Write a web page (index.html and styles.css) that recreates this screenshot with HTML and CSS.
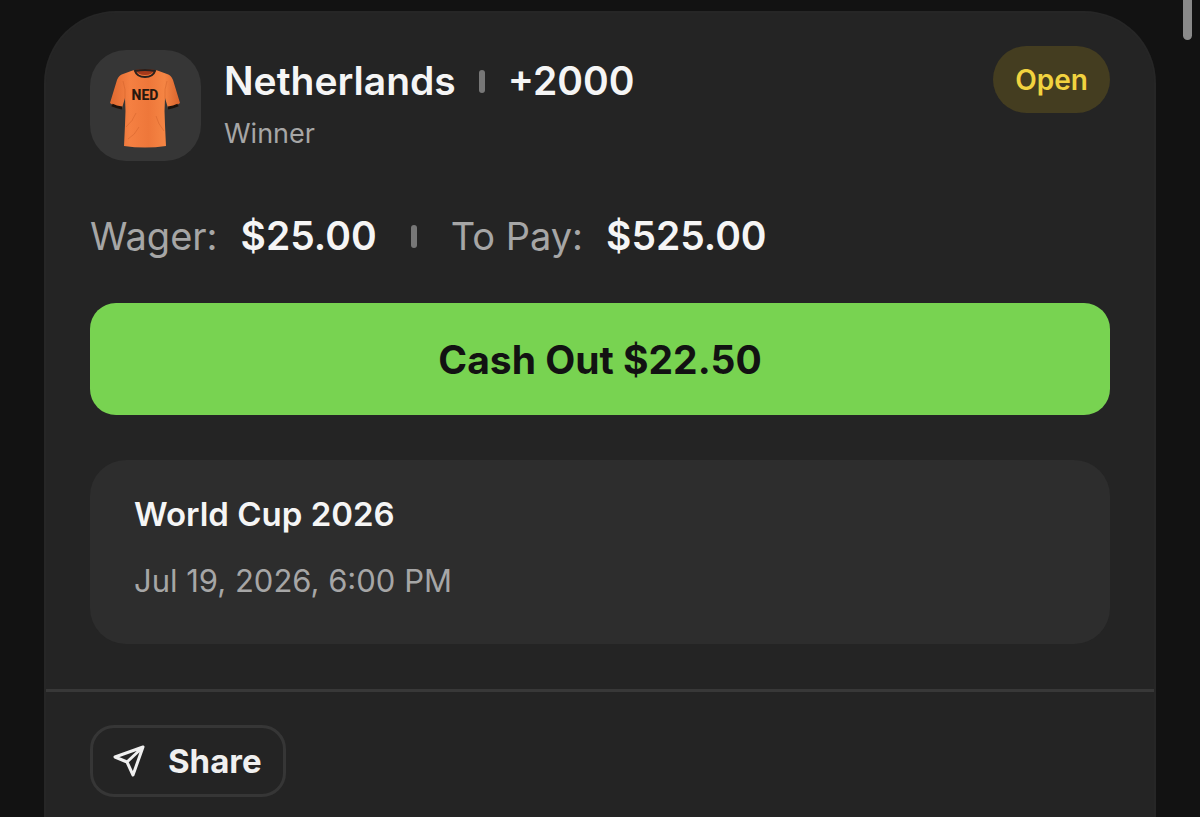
FILE: index.html
```html
<!DOCTYPE html>
<html lang="en">
<head>
<meta charset="utf-8">
<meta name="viewport" content="width=device-width, initial-scale=1">
<title>Netherlands +2000</title>
<link rel="stylesheet" href="styles.css">
</head>
<body>
<main class="bet-card">
  <div class="bet-body">
    <header class="bet-header">
      <div class="team-tile">
        <svg class="shirt" viewBox="0 0 72 80" role="img" aria-label="Netherlands shirt">
          <defs>
            <linearGradient id="cloth" x1="0" x2="1" y1="0" y2="0">
              <stop offset="0" stop-color="#df6930"/>
              <stop offset=".28" stop-color="#f58042"/>
              <stop offset=".55" stop-color="#ee773a"/>
              <stop offset=".78" stop-color="#f58544"/>
              <stop offset="1" stop-color="#d9632c"/>
            </linearGradient>
          </defs>
          <path fill="url(#cloth)" d="M25 1 Q36 4 47 1 L58 5 Q62 6 64 11 L71 34 Q66 38 59 39 L56 29 Q55 42 56 56 L57 77 Q36 80 15 77 L16 56 Q17 42 16 29 L13 39 Q6 38 1 34 L8 11 Q10 6 14 5 Z"/>
          <path fill="#a5391a" d="M26 1 Q36 -1 46 1 Q43 6 36 6 Q29 6 26 1Z"/>
          <path fill="none" stroke="#28201c" stroke-width="2" d="M26 2 Q36 0 46 2 Q44 8 36 8 Q28 8 26 2Z"/>
          <path fill="none" stroke="#1c120c" stroke-width="3" d="M3 36 Q7 38 13 39 M69 36 Q65 38 59 39"/>
          <path fill="none" stroke="#c95a26" stroke-width="1" opacity=".4" d="M16 30 Q17 20 14 12 M56 30 Q55 20 58 12 M17 58 Q24 52 27 44 M55 62 Q49 55 47 47 M19 70 Q26 66 30 58"/>
          <text class="shirt-name" x="36" y="31" text-anchor="middle">NED</text>
        </svg>
      </div>
      <div class="selection">
        <h1 class="selection-title"><span>Netherlands</span><span class="bar"></span><span>+2000</span></h1>
        <p class="market">Winner</p>
      </div>
      <span class="status">Open</span>
    </header>
    <div class="stakes">
      <dl class="stake"><dt>Wager:</dt><dd>$25.00</dd></dl>
      <span class="bar"></span>
      <dl class="stake"><dt>To Pay:</dt><dd>$525.00</dd></dl>
    </div>
    <button class="cash-out" type="button">Cash Out $22.50</button>
    <section class="event">
      <h2 class="event-name">World Cup 2026</h2>
      <p class="event-time">Jul 19, 2026, 6:00 PM</p>
    </section>
  </div>
  <footer class="bet-footer">
    <button class="share" type="button">
      <svg class="share-icon" viewBox="0 0 32 32" aria-hidden="true">
        <path d="M30 2 L2 12 L14 17 L20 30 Z M30 2 L14 17"/>
      </svg>
      <span>Share</span>
    </button>
  </footer>
</main>
<div class="scroll-thumb"></div>
</body>
</html>
```
FILE: styles.css
```css
* { box-sizing: border-box; }

body {
  margin: 0;
  min-height: 100vh;
  display: flex;
  padding: 11px 44px 0;
  background: #121212;
  color: #f5f5f5;
  font-family: Inter, "Liberation Sans", sans-serif;
}

h1, h2, p, dl, dd { margin: 0; }

.bet-card {
  flex: 1;
  min-width: 0;
  border: 2px solid #262626;
  border-bottom: 0;
  border-radius: 72px 72px 0 0;
  background: #242424;
}

.bet-body { padding: 37px 44px 45px; }

.bet-header {
  display: flex;
  align-items: flex-start;
  gap: 23px;
}

.team-tile {
  display: grid;
  place-items: center;
  flex: none;
  width: 111px;
  height: 111px;
  padding: 6px 2px 0 0;
  border-radius: 36px;
  background: #363636;
}

.shirt { width: 72px; height: 80px; }

.shirt-name {
  fill: #28180f;
  font: 800 14px Roboto, sans-serif;
}

.selection { flex: 1; padding-top: 6px; }

.selection-title {
  display: flex;
  align-items: center;
  gap: 23px;
  font-size: 39px;
  font-weight: 600;
  line-height: 50px;
}

.bar {
  width: 6px;
  height: 23px;
  border-radius: 3px;
  background: #777;
}

.market {
  padding-top: 10px;
  color: #a6a6a6;
  font-size: 27px;
  line-height: 36px;
}

.status {
  margin-top: -4px;
  padding: 1px 22px 0;
  border-radius: 34px;
  background: #443d20;
  color: #f2d33f;
  font-size: 28px;
  font-weight: 600;
  line-height: 66px;
}

.stakes {
  display: flex;
  align-items: center;
  gap: 34px;
  padding: 50px 0 42px;
  font-size: 39px;
  line-height: 50px;
}

.stake { display: flex; align-items: baseline; gap: 23px; }
.stake dt { color: #a6a6a6; font-size: 38px; font-weight: 400; }
.stake dd { font-weight: 600; }

.cash-out {
  display: block;
  width: 100%;
  padding: 32px 0 30px;
  border: 0;
  border-radius: 26px;
  background: #78d351;
  color: #121212;
  font: 700 39px/50px Inter, "Liberation Sans", sans-serif;
}

.event {
  margin-top: 45px;
  padding: 32px 44px 40px;
  border-radius: 36px;
  background: #2d2d2d;
}

.event-name { font-size: 33px; font-weight: 600; line-height: 44px; }

.event-time {
  padding-top: 23px;
  padding-bottom: 1px;
  color: #a6a6a6;
  font-size: 31px;
  line-height: 44px;
}

.bet-footer {
  padding: 33px 44px 20px;
  border-top: 3px solid #383838;
}

.share {
  display: flex;
  align-items: center;
  gap: 23px;
  padding: 11px 21px 11px 20px;
  border: 3px solid #363636;
  border-radius: 24px;
  background: transparent;
  color: #f0f0f0;
  font: 700 33px/44px Inter, "Liberation Sans", sans-serif;
}

.share-icon {
  width: 32px;
  height: 32px;
  fill: none;
  stroke: currentColor;
  stroke-width: 3;
  stroke-linejoin: round;
}

.scroll-thumb {
  position: absolute;
  top: -20px;
  right: 8px;
  width: 9px;
  height: 60px;
  border-radius: 5px;
  background: #8a8a8a;
}
```
